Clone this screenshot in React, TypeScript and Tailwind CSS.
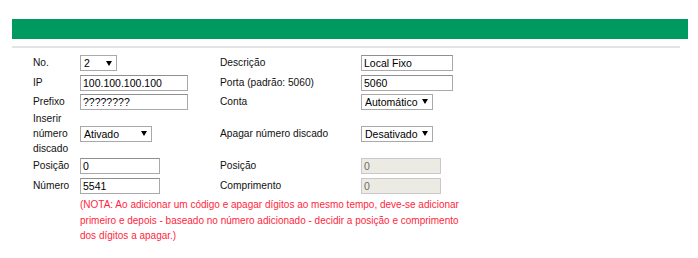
const font = { fontFamily: '"Liberation Sans", Arial, sans-serif' };

function TextBox({ value, w, disabled = false }: { value: string; w: string; disabled?: boolean }) {
  return (
    <div
      className={`${w} h-[16px] border leading-[14px] pl-[2px] text-[10.5px] ${
        disabled ? 'border-[#c8c8c8] bg-[#ebebe4] text-[#6d6d6d]' : 'border-[#a9a9a9] border-t-[#8f8f8f] bg-white text-[#000]'
      }`}
    >
      {value}
    </div>
  );
}

function Select({ value, w }: { value: string; w: string }) {
  return (
    <div className={`${w} h-[16px] border border-[#a9a9a9] bg-white flex items-center justify-between gap-[4px] pl-[3px] pr-[4px] text-[10.5px] leading-[14px] text-[#000]`}>
      <span>{value}</span>
      <svg width="6" height="5" viewBox="0 0 6 5" className="shrink-0">
        <path d="M0 0h6L3 5z" fill="#000" />
      </svg>
    </div>
  );
}

export default function App() {
  return (
    <div className="w-[698px] h-[258px] bg-white text-[10.2px] text-[#111]" style={font}>
      <div className="pt-[19px] pl-[12px] pr-[10px]">
        <div className="h-[20px] bg-[#009a61]" />
        <div className="mt-[7px] mr-[8px] h-[2px] bg-[#e3e3e3]" />
      </div>

      <div className="pl-[33px] pt-[5px] grid grid-cols-[47px_140px_141px_auto] items-center">
        {/* No. / Descrição */}
        <div className="h-[20px] leading-[20px]">No.</div>
        <div><Select value="2" w="w-[37px]" /></div>
        <div>Descrição</div>
        <div><TextBox value="Local Fixo" w="w-[92px]" /></div>

        {/* IP / Porta */}
        <div className="h-[19px] leading-[19px]">IP</div>
        <div><TextBox value="100.100.100.100" w="w-[108px]" /></div>
        <div>Porta (padrão: 5060)</div>
        <div><TextBox value="5060" w="w-[92px]" /></div>

        {/* Prefixo / Conta */}
        <div className="h-[19px] leading-[19px]">Prefixo</div>
        <div><TextBox value="????????" w="w-[108px]" /></div>
        <div>Conta</div>
        <div><Select value="Automático" w="w-fit" /></div>

        {/* Inserir / Apagar */}
        <div className="leading-[15px]">Inserir número discado</div>
        <div><Select value="Ativado" w="w-[72px]" /></div>
        <div>Apagar número discado</div>
        <div><Select value="Desativado" w="w-fit" /></div>

        {/* Posição */}
        <div className="h-[20px] leading-[20px]">Posição</div>
        <div><TextBox value="0" w="w-[80px]" /></div>
        <div>Posição</div>
        <div><TextBox value="0" w="w-[80px]" disabled /></div>

        {/* Número / Comprimento */}
        <div className="h-[20px] leading-[20px]">Número</div>
        <div><TextBox value="5541" w="w-[80px]" /></div>
        <div>Comprimento</div>
        <div><TextBox value="0" w="w-[80px]" disabled /></div>

        <div />
        <div className="col-span-3 w-[392px] text-[10px] leading-[15.5px] pt-[1px] text-[#ff1f3d]">
          (NOTA: Ao adicionar um código e apagar dígitos ao mesmo tempo, deve-se adicionar primeiro e depois - baseado no número adicionado - decidir a posição e comprimento dos dígitos a apagar.)
        </div>
      </div>
    </div>
  );
}
